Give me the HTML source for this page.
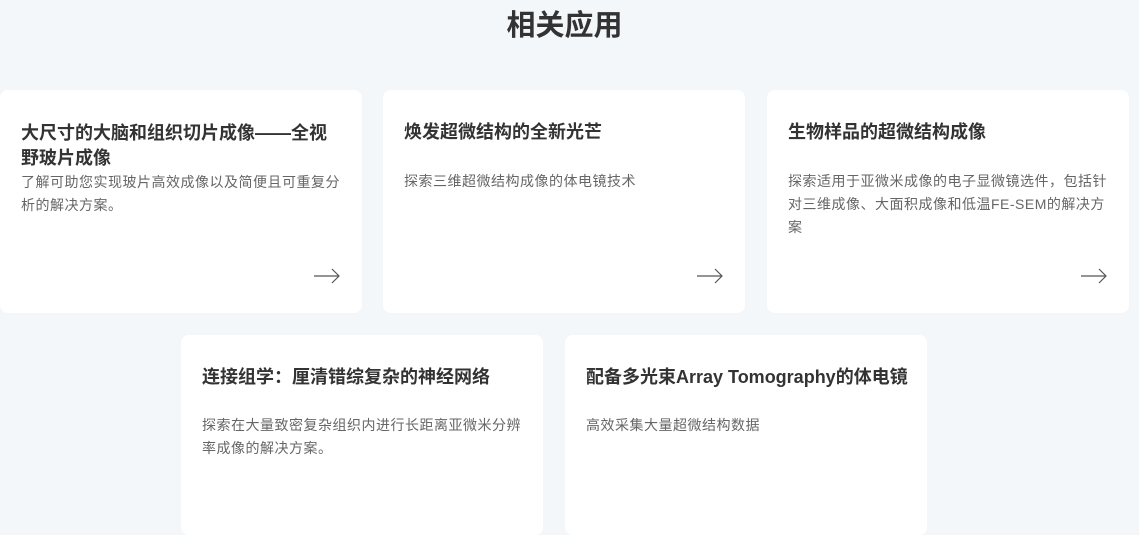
<!DOCTYPE html>
<html><head><meta charset="utf-8"><style>
body{margin:0;width:1139px;height:488px;background:#f4f7fa;overflow:hidden;font-family:"Liberation Sans","Noto Sans CJK SC",sans-serif;position:relative}
h1{position:absolute;left:0;width:1129px;top:6px;margin:0;text-align:center;font-size:29px;font-weight:bold;color:#333;line-height:40px}
.c{position:absolute;width:362px;background:#fff;border-radius:8px;box-sizing:border-box;padding:0 21px}
.c h3{margin:0;font-size:18px;font-weight:bold;color:#333;line-height:25px;white-space:nowrap}
.c p{margin:0;font-size:14px;color:#666;line-height:23px;letter-spacing:0.5px}
.a{position:absolute;right:22px;top:178px}
</style></head><body>
<h1>相关应用</h1>
<div class="c" style="left:0;top:90px;height:223px"><h3 style="margin-top:31px">大尺寸的大脑和组织切片成像——全视<br>野玻片成像</h3><p>了解可助您实现玻片高效成像以及简便且可重复分析的解决方案。</p><svg class="a" width="26" height="16" viewBox="0 0 26 16"><path d="M0 8H25M18 1L25 8L18 15" fill="none" stroke="#555" stroke-width="1.2"/></svg></div>
<div class="c" style="left:383px;top:90px;height:223px"><h3 style="margin-top:30px">焕发超微结构的全新光芒</h3><p style="margin-top:25px">探索三维超微结构成像的体电镜技术</p><svg class="a" width="26" height="16" viewBox="0 0 26 16"><path d="M0 8H25M18 1L25 8L18 15" fill="none" stroke="#555" stroke-width="1.2"/></svg></div>
<div class="c" style="left:767px;top:90px;height:223px"><h3 style="margin-top:30px">生物样品的超微结构成像</h3><p style="margin-top:25px">探索适用于亚微米成像的电子显微镜选件，包括针对三维成像、大面积成像和低温FE-SEM的解决方案</p><svg class="a" width="26" height="16" viewBox="0 0 26 16"><path d="M0 8H25M18 1L25 8L18 15" fill="none" stroke="#555" stroke-width="1.2"/></svg></div>
<div class="c" style="left:181px;top:335px;height:200px"><h3 style="margin-top:30px">连接组学：厘清错综复杂的神经网络</h3><p style="margin-top:24px">探索在大量致密复杂组织内进行长距离亚微米分辨率成像的解决方案。</p></div>
<div class="c" style="left:565px;top:335px;height:200px"><h3 style="margin-top:30px">配备多光束Array Tomography的体电镜</h3><p style="margin-top:24px">高效采集大量超微结构数据</p></div>
</body></html>
